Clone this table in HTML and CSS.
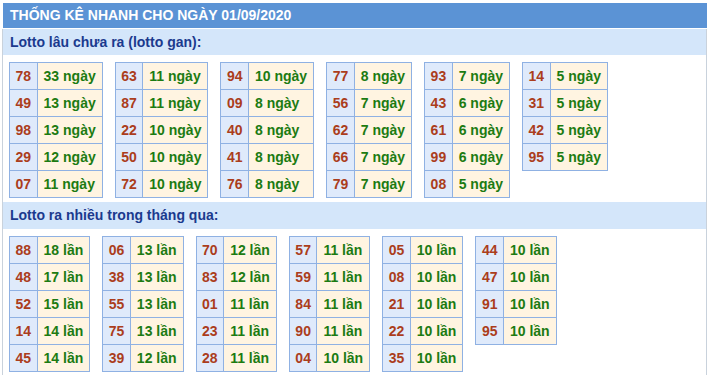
FILE: index.html
```html
<!DOCTYPE html>
<html lang="vi">
<head>
<meta charset="utf-8">
<title>Thống kê nhanh</title>
<link rel="stylesheet" href="styles.css">
</head>
<body>
<div class="box">
  <div class="title">THỐNG KÊ NHANH CHO NGÀY 01/09/2020</div>
  <div class="content">
    <div class="sub">Lotto lâu chưa ra (lotto gan):</div>
    <div class="group">
      <table class="lt"><tr><td class="n">78</td><td class="v">33 ngày</td></tr><tr><td class="n">49</td><td class="v">13 ngày</td></tr><tr><td class="n">98</td><td class="v">13 ngày</td></tr><tr><td class="n">29</td><td class="v">12 ngày</td></tr><tr><td class="n">07</td><td class="v">11 ngày</td></tr></table>
      <table class="lt"><tr><td class="n">63</td><td class="v">11 ngày</td></tr><tr><td class="n">87</td><td class="v">11 ngày</td></tr><tr><td class="n">22</td><td class="v">10 ngày</td></tr><tr><td class="n">50</td><td class="v">10 ngày</td></tr><tr><td class="n">72</td><td class="v">10 ngày</td></tr></table>
      <table class="lt"><tr><td class="n">94</td><td class="v">10 ngày</td></tr><tr><td class="n">09</td><td class="v">8 ngày</td></tr><tr><td class="n">40</td><td class="v">8 ngày</td></tr><tr><td class="n">41</td><td class="v">8 ngày</td></tr><tr><td class="n">76</td><td class="v">8 ngày</td></tr></table>
      <table class="lt"><tr><td class="n">77</td><td class="v">8 ngày</td></tr><tr><td class="n">56</td><td class="v">7 ngày</td></tr><tr><td class="n">62</td><td class="v">7 ngày</td></tr><tr><td class="n">66</td><td class="v">7 ngày</td></tr><tr><td class="n">79</td><td class="v">7 ngày</td></tr></table>
      <table class="lt"><tr><td class="n">93</td><td class="v">7 ngày</td></tr><tr><td class="n">43</td><td class="v">6 ngày</td></tr><tr><td class="n">61</td><td class="v">6 ngày</td></tr><tr><td class="n">99</td><td class="v">6 ngày</td></tr><tr><td class="n">08</td><td class="v">5 ngày</td></tr></table>
      <table class="lt"><tr><td class="n">14</td><td class="v">5 ngày</td></tr><tr><td class="n">31</td><td class="v">5 ngày</td></tr><tr><td class="n">42</td><td class="v">5 ngày</td></tr><tr><td class="n">95</td><td class="v">5 ngày</td></tr></table>
    </div>
    <div class="sub sub2">Lotto ra nhiều trong tháng qua:</div>
    <div class="group">
      <table class="lt"><tr><td class="n">88</td><td class="v">18 lần</td></tr><tr><td class="n">48</td><td class="v">17 lần</td></tr><tr><td class="n">52</td><td class="v">15 lần</td></tr><tr><td class="n">14</td><td class="v">14 lần</td></tr><tr><td class="n">45</td><td class="v">14 lần</td></tr></table>
      <table class="lt"><tr><td class="n">06</td><td class="v">13 lần</td></tr><tr><td class="n">38</td><td class="v">13 lần</td></tr><tr><td class="n">55</td><td class="v">13 lần</td></tr><tr><td class="n">75</td><td class="v">13 lần</td></tr><tr><td class="n">39</td><td class="v">12 lần</td></tr></table>
      <table class="lt"><tr><td class="n">70</td><td class="v">12 lần</td></tr><tr><td class="n">83</td><td class="v">12 lần</td></tr><tr><td class="n">01</td><td class="v">11 lần</td></tr><tr><td class="n">23</td><td class="v">11 lần</td></tr><tr><td class="n">28</td><td class="v">11 lần</td></tr></table>
      <table class="lt"><tr><td class="n">57</td><td class="v">11 lần</td></tr><tr><td class="n">59</td><td class="v">11 lần</td></tr><tr><td class="n">84</td><td class="v">11 lần</td></tr><tr><td class="n">90</td><td class="v">11 lần</td></tr><tr><td class="n">04</td><td class="v">10 lần</td></tr></table>
      <table class="lt"><tr><td class="n">05</td><td class="v">10 lần</td></tr><tr><td class="n">08</td><td class="v">10 lần</td></tr><tr><td class="n">21</td><td class="v">10 lần</td></tr><tr><td class="n">22</td><td class="v">10 lần</td></tr><tr><td class="n">35</td><td class="v">10 lần</td></tr></table>
      <table class="lt"><tr><td class="n">44</td><td class="v">10 lần</td></tr><tr><td class="n">47</td><td class="v">10 lần</td></tr><tr><td class="n">91</td><td class="v">10 lần</td></tr><tr><td class="n">95</td><td class="v">10 lần</td></tr></table>
    </div>
  </div>
</div>
</body>
</html>
```
FILE: styles.css
```css
html, body {
  margin: 0;
  padding: 0;
  background: #ffffff;
}
body {
  font-family: "Liberation Sans", Arial, sans-serif;
  font-size: 14px;
}
.box {
  margin: 3px 0 0 2px;
  width: 705px;
}
.title {
  margin-left: 1px;
  height: 25px;
  line-height: 25px;
  padding-left: 7px;
  background: #5b93d5;
  color: #ffffff;
  font-weight: bold;
  font-size: 14px;
}
.content {
  border-left: 1px solid #c9d2dc;
  border-right: 1px solid #c9d2dc;
  height: 347px;
}
.sub {
  margin-top: 1px;
  height: 26px;
  line-height: 26px;
  padding-left: 7px;
  background: #d4e6fa;
  color: #1b3a8e;
  font-weight: bold;
}
.sub2 {
  margin-top: 4px;
  height: 27px;
  line-height: 27px;
}
.group {
  display: flex;
  align-items: flex-start;
  gap: 12px;
  padding: 7px 0 0 6px;
}
.lt {
  border-collapse: collapse;
  font-weight: bold;
  font-size: 14px;
}
.lt td {
  border: 1px solid #8fb1e3;
  padding: 5px 6px;
  line-height: 16px;
  white-space: nowrap;
}
.lt .n {
  padding-left: 5.5px;
  padding-right: 5.5px;
  background: #dfeafb;
  color: #ab3d1c;
  text-align: center;
}
.lt .v {
  background: #fff4e1;
  color: #1c7b12;
}
```
